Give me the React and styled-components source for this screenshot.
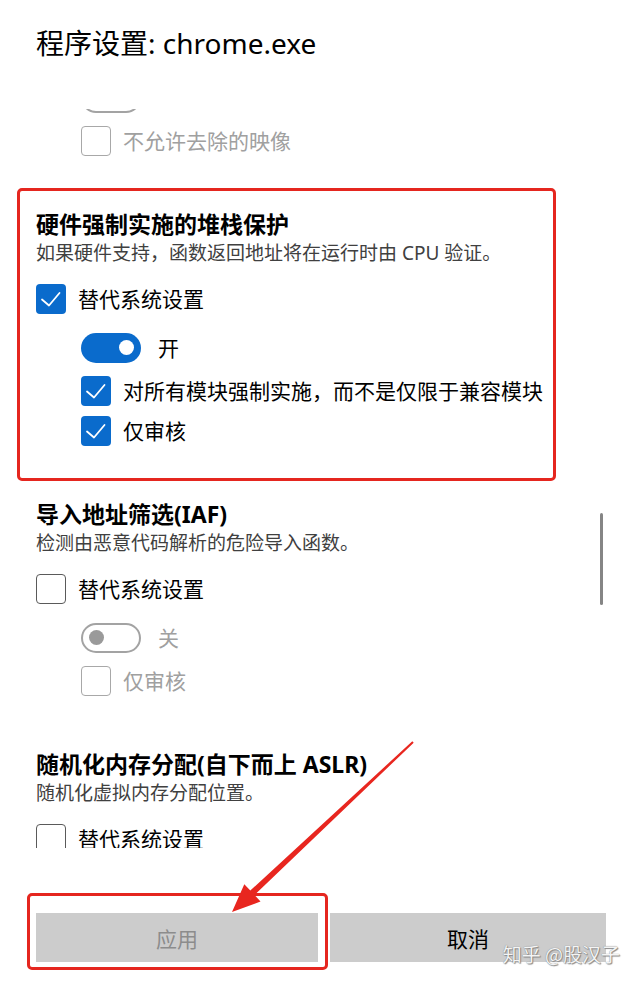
import React from "react";
import styled, { createGlobalStyle } from "styled-components";

const GlobalStyle = createGlobalStyle`
  html, body {
    margin: 0;
    padding: 0;
    background: #fff;
  }
  body {
    font-family: "Noto Sans", "Noto Sans CJK SC", sans-serif;
    color: #000;
  }
`;

const Page = styled.div`
  position: relative;
  width: 636px;
  height: 984px;
  overflow: hidden;
  background: #fff;
`;

const Header = styled.header`
  padding: 25px 36px 0;
`;

const Title = styled.h1`
  margin: 0;
  height: 36px;
  font-size: 28px;
  font-weight: 400;
  line-height: 36px;
  white-space: nowrap;
`;

const Viewport = styled.div`
  position: relative;
  margin-top: 48px;
  height: 739px;
  overflow: hidden;
`;

const Content = styled.div`
  display: flex;
  flex-direction: column;
  gap: 54px;
  margin-top: ${(p) => -p.$scroll}px;
  padding: 0 36px;
`;

const Scrollbar = styled.div`
  position: absolute;
  top: 404px;
  right: 33px;
  width: 3px;
  height: 92px;
  border-radius: 2px;
  background: #858585;
`;

const Section = styled.section`
  position: relative;
  display: flex;
  flex-direction: column;

  ${(p) =>
    p.$marked &&
    `
    &::after {
      content: "";
      position: absolute;
      top: -22px;
      bottom: -35px;
      left: -19px;
      right: 44px;
      border: 3px solid #e5261f;
      border-radius: 5px;
      pointer-events: none;
    }
  `}
`;

const SectionTitle = styled.h2`
  margin: 0;
  height: 29px;
  font-size: 23px;
  font-weight: 700;
  line-height: 29px;
  white-space: nowrap;
`;

const Desc = styled.p`
  margin: 0 0 16px;
  height: 29px;
  font-size: 19px;
  line-height: 29px;
  color: #404040;
  white-space: nowrap;
`;

const SubList = styled.div`
  display: flex;
  flex-direction: column;
  padding-left: 45px;
  margin-top: 19px;
`;

const Row = styled.label`
  display: flex;
  align-items: center;
  gap: ${(p) => (p.$switch ? 17 : 12)}px;
  height: 30px;
  margin-top: ${(p) => p.$mt || 0}px;
  font-size: 21px;
  line-height: 30px;
  color: ${(p) => (p.$disabled ? "#a0a0a0" : "#000")};
  white-space: nowrap;
`;

const Box = styled.span`
  position: relative;
  flex: none;
  box-sizing: border-box;
  width: 30px;
  height: 30px;
  border-radius: 4px;
  background: ${(p) => (p.$checked ? "#0a6bcc" : "#fff")};
  border: ${(p) =>
    p.$checked ? "none" : `1.5px solid ${p.$disabled ? "#a8a8a8" : "#5a5a5a"}`};

  svg {
    position: absolute;
    inset: 0;
  }
`;

const Switch = styled.span`
  position: relative;
  flex: none;
  box-sizing: border-box;
  width: 60px;
  height: 30px;
  border-radius: 15px;
  background: ${(p) => (p.$on ? "#0a6bcc" : "#fff")};
  border: ${(p) => (p.$on ? "none" : "2px solid #a3a3a3")};

  &::after {
    content: "";
    position: absolute;
    top: 50%;
    width: 15px;
    height: 15px;
    margin-top: -7.5px;
    border-radius: 50%;
    background: ${(p) => (p.$on ? "#fff" : "#9a9a9a")};
    ${(p) => (p.$on ? "right: 7px;" : "left: 6px;")}
  }
`;

const Footer = styled.footer`
  display: grid;
  grid-template-columns: 282px 276px;
  gap: 12px;
  margin-top: 65px;
  padding: 0 36px;
`;

const Button = styled.button`
  position: relative;
  height: 49px;
  border: none;
  border-radius: 0;
  padding: 0;
  background: #cccccc;
  font-family: "Noto Sans CJK SC", sans-serif;
  font-size: 21px;
  color: ${(p) => (p.$disabled ? "#8c8c8c" : "#000")};

  ${(p) =>
    p.$marked &&
    `
    &::after {
      content: "";
      position: absolute;
      top: -20px;
      bottom: -8px;
      left: -9px;
      right: -10px;
      border: 3px solid #e5261f;
      border-radius: 5px;
      pointer-events: none;
    }
  `}
`;

const Watermark = styled.div`
  position: absolute;
  top: 941px;
  right: 16px;
  font-family: "Noto Sans CJK SC", sans-serif;
  font-size: 19px;
  line-height: 26px;
  color: #f4f4f4;
  text-shadow: 0 0 1px #6a6a6a, 1px 1px 1px #8a8a8a;
  white-space: nowrap;
`;

const Arrow = styled.svg`
  position: absolute;
  top: 0;
  left: 0;
  pointer-events: none;
`;

const Check = () => (
  <svg width="30" height="30" viewBox="0 0 30 30">
    <path
      d="M6 15.5 L13 21.5 L23.5 9"
      fill="none"
      stroke="#fff"
      strokeWidth="1.8"
      strokeLinecap="round"
      strokeLinejoin="round"
    />
  </svg>
);

const Option = ({ checked, disabled, mt, children }) => (
  <Row $disabled={disabled} $mt={mt}>
    <Box $checked={checked} $disabled={disabled}>
      {checked && <Check />}
    </Box>
    {children}
  </Row>
);

const Toggle = ({ on, disabled, children }) => (
  <Row $switch $disabled={disabled}>
    <Switch $on={on} />
    {children}
  </Row>
);

const sections = [
  {
    title: "强制映像随机化(强制性 ASLR)",
    desc: "强制重新定位不是使用 /DYNAMICBASE 编译的映像",
    override: false,
    on: false,
    subs: ["不允许去除的映像"],
  },
  {
    title: "硬件强制实施的堆栈保护",
    desc: "如果硬件支持，函数返回地址将在运行时由 CPU 验证。",
    override: true,
    on: true,
    subs: ["对所有模块强制实施，而不是仅限于兼容模块", "仅审核"],
    marked: true,
  },
  {
    title: "导入地址筛选(IAF)",
    desc: "检测由恶意代码解析的危险导入函数。",
    override: false,
    on: false,
    subs: ["仅审核"],
  },
  {
    title: "随机化内存分配(自下而上 ASLR)",
    desc: "随机化虚拟内存分配位置。",
    override: false,
    on: false,
    subs: ["不允许去除的映像"],
  },
];

const App = () => {
  return (
    <Page>
      <GlobalStyle />
      <Header>
        <Title>程序设置: chrome.exe</Title>
      </Header>

      <Viewport>
        <Content $scroll={149.5}>
          {sections.map((s) => (
            <Section key={s.title} $marked={s.marked}>
              <SectionTitle>{s.title}</SectionTitle>
              <Desc>{s.desc}</Desc>
              <Option checked={s.override}>替代系统设置</Option>
              <SubList>
                <Toggle on={s.on} disabled={!s.override}>
                  {s.on ? "开" : "关"}
                </Toggle>
                {s.subs.map((label, i) => (
                  <Option
                    key={label}
                    checked={s.override}
                    disabled={!s.override}
                    mt={i === 0 ? 13 : 10}
                  >
                    {label}
                  </Option>
                ))}
              </SubList>
            </Section>
          ))}
        </Content>
        <Scrollbar />
      </Viewport>

      <Footer>
        <Button $disabled $marked>
          应用
        </Button>
        <Button>取消</Button>
      </Footer>

      <Watermark>知乎 @股汉子</Watermark>

      <Arrow width="636" height="984" viewBox="0 0 636 984">
        <polygon
          points="413.7,742.7 254.5,895 260.5,901.5 232,912 244.3,884.2 250.3,890.6 412.3,741.3"
          fill="#e8261f"
        />
      </Arrow>
    </Page>
  );
};

export default App;
